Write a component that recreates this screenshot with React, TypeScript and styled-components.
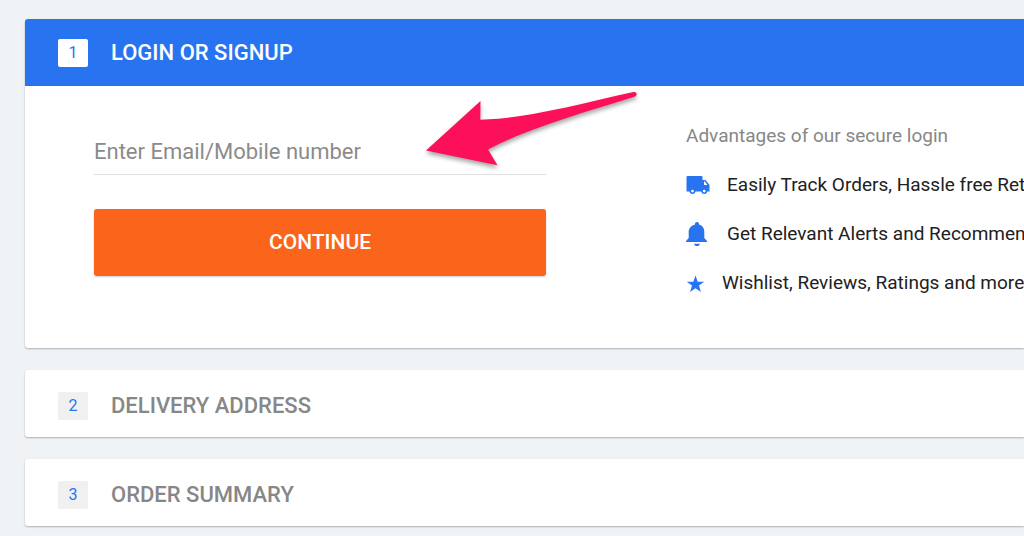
import React from 'react';
import styled, { createGlobalStyle } from 'styled-components';

const GlobalStyle = createGlobalStyle`
  * { box-sizing: border-box; }
  body {
    margin: 0;
    background: #eff3f6;
    font-family: Roboto, 'Liberation Sans', sans-serif;
    overflow-x: hidden;
  }
`;

const Page = styled.main`
  display: flex;
  flex-direction: column;
  gap: 22px;
  padding: 19px 0 10px 25px;
  overflow: hidden;
`;

const Card = styled.section`
  background: #fff;
  border-radius: 3px 0 0 3px;
  box-shadow: 0 1px 2px rgba(0, 0, 0, 0.28);
`;

const StepHeader = styled.header<{ $active?: boolean }>`
  display: flex;
  align-items: flex-start;
  gap: 23px;
  height: 67px;
  padding: ${(p) => (p.$active ? '20px' : '22px')} 33px 0;
  border-radius: 3px 0 0 0;
  background: ${(p) => (p.$active ? '#2874f0' : 'transparent')};
  color: ${(p) => (p.$active ? '#fff' : '#878787')};
`;

const StepNumber = styled.span<{ $active?: boolean }>`
  width: 30px;
  height: 28px;
  border-radius: 2px;
  background: ${(p) => (p.$active ? '#fff' : '#f0f0f0')};
  color: #2874f0;
  font-size: 16px;
  line-height: 28px;
  text-align: center;
`;

const StepTitle = styled.h2`
  margin: 0;
  font-size: 22px;
  line-height: 28px;
  font-weight: 500;
  white-space: nowrap;
`;

const LoginBody = styled.div`
  position: relative;
  display: grid;
  grid-template-columns: 452px minmax(0, 1fr);
  column-gap: 140px;
  padding: 36px 0 41px 69px;
`;

const Form = styled.form`
  display: flex;
  flex-direction: column;
  gap: 34px;
`;

const ContactInput = styled.input`
  width: 100%;
  height: 53px;
  padding: 6px 0 0;
  border: 0;
  border-bottom: 1px solid #e0e0e0;
  outline: 0;
  background: transparent;
  font: 400 22px Roboto, 'Liberation Sans', sans-serif;
  color: #212121;

  &::placeholder {
    color: #8b8b8b;
    opacity: 1;
  }
`;

const ContinueButton = styled.button`
  height: 67px;
  padding: 0 0 2px;
  border: 0;
  border-radius: 3px;
  background: #fb641b;
  box-shadow: 0 1px 2px rgba(0, 0, 0, 0.2);
  color: #fff;
  font: 500 21px Roboto, 'Liberation Sans', sans-serif;
  cursor: pointer;
`;

const Advantages = styled.div`
  padding-top: 2px;
  overflow: hidden;
`;

const AdvantagesTitle = styled.p`
  margin: 0;
  color: #878787;
  font-size: 19px;
  line-height: 24px;
  white-space: nowrap;
`;

const AdvantageList = styled.ul`
  margin: 0;
  padding: 12px 0 0;
  list-style: none;
`;

const Advantage = styled.li<{ $gap: number }>`
  display: flex;
  align-items: center;
  gap: ${(p) => p.$gap}px;
  height: 49px;
  color: #212121;
  font-size: 19px;
  line-height: 24px;
  white-space: nowrap;

  svg {
    flex: none;
    fill: #2874f0;
  }
`;

const Arrow = styled.svg`
  position: absolute;
  top: 0;
  left: 395px;
  pointer-events: none;
  filter: drop-shadow(0 3px 2px rgba(0, 0, 0, 0.35));
`;

const TruckIcon = () => (
  <svg width="24" height="22" viewBox="0 0 24 22" aria-hidden="true">
    <path
      fillRule="evenodd"
      d="M1.500 2H15.500Q16.500 2 16.500 3V6H19.500L23.500 11V17.500H21.300A3.100 3.100 0 0 1 15.200 17.500H9.500A3.100 3.100 0 0 1 3.400 17.500H.5V3Q.5 2 1.500 2ZM18 7.500V11H21.400L18.900 7.500ZM6.500 15.700A1.400 1.400 0 1 0 6.500 18.500 1.400 1.400 0 0 0 6.500 15.700ZM18.200 15.700A1.400 1.400 0 1 0 18.200 18.500 1.400 1.400 0 0 0 18.200 15.700Z"
    />
  </svg>
);

const BellIcon = () => (
  <svg width="22" height="26" viewBox="0 0 22 26" aria-hidden="true">
    <path d="M11 1C12.300 1 13 1.800 13 3V3.600C16.600 4.600 18.300 7.400 18.300 11V17L21 20V21H0V20L2.700 17V11C2.700 7.400 5.400 4.600 9 3.600V3C9 1.800 9.700 1 11 1ZM8 22.800H14C13.600 24.400 12.500 25.100 11 25.100S8.400 24.400 8 22.800Z" />
  </svg>
);

const StarIcon = () => (
  <svg width="19" height="20" viewBox="0 0 19 20" aria-hidden="true">
    <path d="M9.500 2.500L11.700 8.800H18.200L13 12.600L14.900 19L9.500 15.200L4.100 19L6 12.600L.8 8.800H7.300Z" />
  </svg>
);

const advantages = [
  { icon: <TruckIcon />, text: 'Easily Track Orders, Hassle free Returns', gap: 17 },
  { icon: <BellIcon />, text: 'Get Relevant Alerts and Recommendation', gap: 19 },
  { icon: <StarIcon />, text: 'Wishlist, Reviews, Ratings and more.', gap: 17 },
];

const upcomingSteps = [
  { number: 2, title: 'DELIVERY ADDRESS' },
  { number: 3, title: 'ORDER SUMMARY' },
];

export default function App() {
  return (
    <>
      <GlobalStyle />
      <Page>
        <Card>
          <StepHeader $active>
            <StepNumber $active>1</StepNumber>
            <StepTitle>LOGIN OR SIGNUP</StepTitle>
          </StepHeader>
          <LoginBody>
            <Form onSubmit={(e) => e.preventDefault()}>
              <ContactInput
                type="text"
                aria-label="Enter Email/Mobile number"
                placeholder="Enter Email/Mobile number"
              />
              <ContinueButton type="submit">CONTINUE</ContinueButton>
            </Form>
            <Advantages>
              <AdvantagesTitle>Advantages of our secure login</AdvantagesTitle>
              <AdvantageList>
                {advantages.map((item) => (
                  <Advantage key={item.text} $gap={item.gap}>
                    {item.icon}
                    <span>{item.text}</span>
                  </Advantage>
                ))}
              </AdvantageList>
            </Advantages>
            <Arrow width="224" height="88" viewBox="0 0 224 88" aria-hidden="true">
              <path
                fill="#fb1059"
                d="M6 64.500L60.500 15L60.300 33.700C109 32.500 160 17.500 213.500 6C217.300 5.300 217.800 9.600 214.500 10.800C165 26 109 42 68 63.500L77.500 79.200Z"
              />
            </Arrow>
          </LoginBody>
        </Card>
        {upcomingSteps.map((step) => (
          <Card key={step.number}>
            <StepHeader>
              <StepNumber>{step.number}</StepNumber>
              <StepTitle>{step.title}</StepTitle>
            </StepHeader>
          </Card>
        ))}
      </Page>
    </>
  );
}
